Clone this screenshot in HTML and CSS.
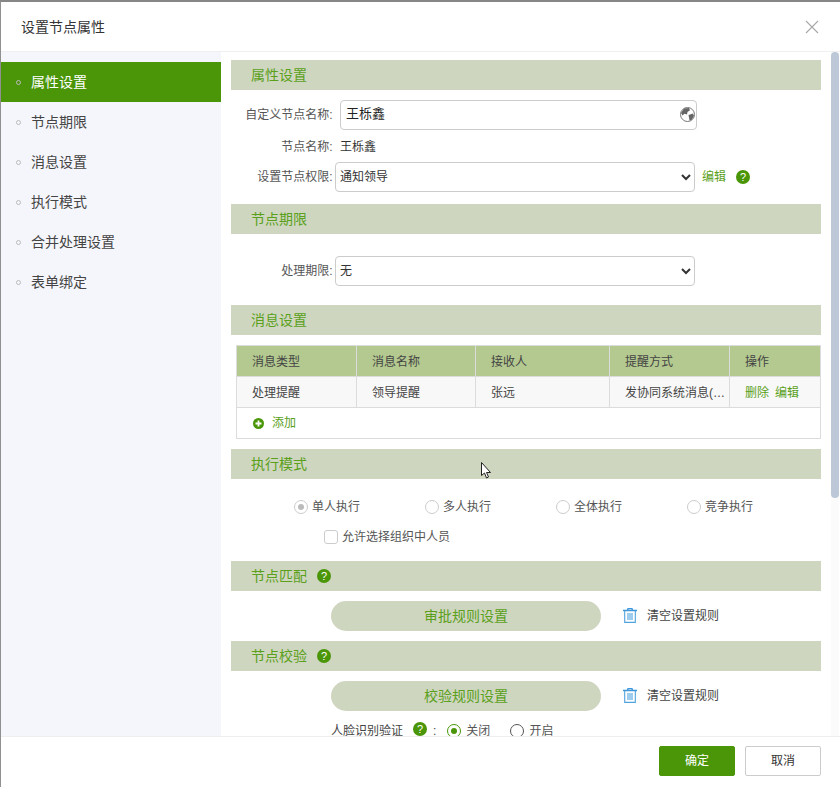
FILE: index.html
```html
<!DOCTYPE html>
<html lang="zh-CN">
<head>
  <meta charset="UTF-8">
  <title>设置节点属性</title>
  <link rel="stylesheet" href="styles.css">
</head>
<body>
  <div class="dialog">
    <div class="dialog-head">
      <span class="dialog-title">设置节点属性</span>
      <svg class="close" width="14" height="14" viewBox="0 0 14 14"><path d="M1 1L13 13M13 1L1 13" stroke="#a8a8a8" stroke-width="1.1" fill="none"/></svg>
    </div>

    <div class="dialog-body">
      <ul class="side">
        <li class="side-item active"><i class="dot"></i>属性设置</li>
        <li class="side-item"><i class="dot"></i>节点期限</li>
        <li class="side-item"><i class="dot"></i>消息设置</li>
        <li class="side-item"><i class="dot"></i>执行模式</li>
        <li class="side-item"><i class="dot"></i>合并处理设置</li>
        <li class="side-item"><i class="dot"></i>表单绑定</li>
      </ul>

      <div class="main">
        <div class="sec-head">属性设置</div>
        <div class="form-row row-input">
          <label class="label">自定义节点名称:</label>
          <div class="name-input">
            <span>王栎鑫</span>
            <svg width="15" height="15" viewBox="0 0 15 15">
              <circle cx="7.5" cy="7.5" r="7" fill="#fff" stroke="#777"/>
              <path d="M4 1.5L9 1L10 3.2L7.5 5L7 7.5L4.5 6.8L2.5 8.5L1 6ZM8.5 8L13 6.5L14 9L11.5 13L9.5 13.5L9 10.5Z" fill="#666"/>
            </svg>
          </div>
        </div>
        <div class="form-row row-text">
          <label class="label">节点名称:</label>
          <span class="value">王栎鑫</span>
        </div>
        <div class="form-row">
          <label class="label">设置节点权限:</label>
          <select class="sel"><option>通知领导</option></select>
          <a class="link edit-link">编辑</a>
          <i class="help">?</i>
        </div>

        <div class="sec-head gap12">节点期限</div>
        <div class="form-row row-limit">
          <label class="label">处理期限:</label>
          <select class="sel"><option>无</option></select>
        </div>

        <div class="sec-head gap19">消息设置</div>
        <table class="msg-table">
          <tr class="msg-head">
            <th class="c1">消息类型</th>
            <th class="c2">消息名称</th>
            <th class="c3">接收人</th>
            <th class="c4">提醒方式</th>
            <th>操作</th>
          </tr>
          <tr class="msg-row">
            <td>处理提醒</td>
            <td>领导提醒</td>
            <td>张远</td>
            <td class="way"><div class="ellipsis">发协同系统消息(短信)</div></td>
            <td><a class="link">删除</a><a class="link op-next">编辑</a></td>
          </tr>
          <tr>
            <td colspan="5">
              <a class="link add">
                <svg width="11" height="11" viewBox="0 0 11 11"><circle cx="5.5" cy="5.5" r="5.5" fill="#4a9608"/><path d="M5.5 2.5V8.5M2.5 5.5H8.5" stroke="#fff" stroke-width="1.8"/></svg>
                添加
              </a>
            </td>
          </tr>
        </table>

        <div class="sec-head gap10">执行模式</div>
        <div class="radios">
          <span class="radio-item"><i class="radio disabled"></i>单人执行</span>
          <span class="radio-item"><i class="radio"></i>多人执行</span>
          <span class="radio-item"><i class="radio"></i>全体执行</span>
          <span class="radio-item"><i class="radio"></i>竞争执行</span>
        </div>
        <div class="check-row"><i class="check"></i>允许选择组织中人员</div>

        <div class="sec-head gap9">节点匹配<i class="help">?</i></div>
        <div class="rule-row">
          <a class="pill">审批规则设置</a>
          <svg class="trash" width="14" height="15" viewBox="0 0 14 15"><path d="M0 2.5H14M4.5 2L5 .6H9L9.5 2" stroke="#3d97da" stroke-width="1.3" fill="none"/><path d="M1.7 3V14.4H12.3V3M5 5V12M7 5V12M9 5V12" stroke="#4fa3e0" stroke-width="1.1" fill="none"/></svg>
          <span class="clear">清空设置规则</span>
        </div>

        <div class="sec-head gap10">节点校验<i class="help">?</i></div>
        <div class="rule-row">
          <a class="pill">校验规则设置</a>
          <svg class="trash" width="14" height="15" viewBox="0 0 14 15"><path d="M0 2.5H14M4.5 2L5 .6H9L9.5 2" stroke="#3d97da" stroke-width="1.3" fill="none"/><path d="M1.7 3V14.4H12.3V3M5 5V12M7 5V12M9 5V12" stroke="#4fa3e0" stroke-width="1.1" fill="none"/></svg>
          <span class="clear">清空设置规则</span>
        </div>
        <div class="face-row">
          人脸识别验证<i class="help face-help">?</i><span class="face-colon">:</span>
          <span class="radio-item face-radio"><i class="radio on"></i>关闭</span>
          <span class="radio-item"><i class="radio dark"></i>开启</span>
        </div>
      </div>

      <div class="scroll-track"><div class="scroll-thumb"></div></div>
    </div>

    <div class="dialog-foot">
      <button class="btn btn-ok">确定</button>
      <button class="btn">取消</button>
    </div>
  </div>

  <!-- mouse pointer caught in the screenshot -->
  <svg class="pointer" width="11" height="17" viewBox="0 0 11 17"><path d="M.5 .5V13.5L3.5 11L5.5 16L7.5 15L5.5 10.5H9.5Z" fill="#fff" stroke="#222" stroke-width="1"/></svg>
</body>
</html>
```

FILE: styles.css
```css
* {
  margin: 0;
  padding: 0;
  box-sizing: border-box;
}

html, body {
  height: 100%;
  overflow: hidden;
}

body {
  position: relative;
  background: #fff;
  color: #333;
  font-family: "Liberation Sans", "Noto Sans CJK SC", sans-serif;
  font-size: 12px;
  line-height: 1.5;
}

.dialog {
  display: flex;
  flex-direction: column;
  height: 787px;
  border-top: 2px solid #868686;
  border-left: 1px solid #909090;
}

.dialog-head {
  display: flex;
  flex: none;
  align-items: center;
  justify-content: space-between;
  height: 50px;
  padding: 0 21px 0 20px;
  border-bottom: 1px solid #f0f0f0;
}

.dialog-title {
  margin-top: 2px;
  font-size: 14px;
  color: #333;
}

.dialog-body {
  position: relative;
  display: flex;
  flex: 1;
  min-height: 0;
  overflow: hidden;
}

.dialog-foot {
  display: flex;
  flex: none;
  justify-content: flex-end;
  gap: 10px;
  height: 51px;
  padding: 9px 19px 0 0;
  border-top: 1px solid #eee;
}

.btn {
  width: 76px;
  height: 30px;
  border: 1px solid #ccc;
  border-radius: 2px;
  background: #fff;
  color: #333;
  font: inherit;
}

.btn-ok {
  border-color: #4a9608;
  background: #4a9608;
  color: #fff;
}

/* left nav */
.side {
  flex: none;
  width: 220px;
  padding-top: 10px;
  background: #f5f6fb;
  list-style: none;
}

.side-item {
  display: flex;
  align-items: center;
  height: 40px;
  padding-left: 15px;
  color: #444;
  font-size: 14px;
}

.side-item.active {
  background: #4a9608;
  color: #fff;
}

.dot {
  width: 5px;
  height: 5px;
  margin-right: 10px;
  border: 1px solid #bbb;
  border-radius: 50%;
}

/* right content */
.main {
  flex: 1;
  min-width: 0;
  padding: 8px 19px 0 10px;
}

.sec-head {
  display: flex;
  align-items: center;
  height: 30px;
  padding-left: 20px;
  background: #cfd6c0;
  color: #5aa01a;
  font-size: 14px;
}

.gap9 { margin-top: 9px; }
.gap10 { margin-top: 10px; }
.gap12 { margin-top: 12px; }
.gap19 { margin-top: 19px; }

.form-row {
  display: flex;
  align-items: center;
}

.row-input {
  margin-top: 10px;
}

.row-text {
  height: 32px;
  padding-top: 2px;
}

.row-limit {
  margin-top: 22px;
}

.label {
  width: 101.5px;
  margin-right: 2.5px;
  color: #555;
  text-align: right;
}

.row-input .name-input,
.row-text .value {
  margin-left: 5px;
}

.value {
  color: #333;
}

.name-input {
  display: flex;
  align-items: center;
  justify-content: space-between;
  width: 357px;
  height: 30px;
  padding: 0 1px 2px 5px;
  border: 1px solid #ccc;
  border-radius: 4px;
  font-size: 13px;
  color: #222;
}

.sel {
  width: 360px;
  height: 30px;
  padding-left: 0;
  border: 1px solid #ccc;
  border-radius: 4px;
  background: #fff;
  color: #333;
  font: inherit;
}

.link {
  color: #5aa01a;
}

.edit-link {
  margin-left: 7px;
}

.help {
  display: inline-block;
  width: 14px;
  height: 14px;
  margin-left: 10px;
  border-radius: 50%;
  background: #4a9608;
  color: #fff;
  font-size: 11px;
  font-style: normal;
  line-height: 14px;
  text-align: center;
}

/* message table */
.msg-table {
  width: 585px;
  height: 94px;
  margin: 10px 0 0 5px;
  border-collapse: collapse;
  table-layout: fixed;
}

.msg-table th,
.msg-table td {
  height: 31px;
  padding: 0 10px 0 15px;
  border: 1px solid #dcdcdc;
  font-weight: normal;
  text-align: left;
}

.msg-table .msg-head th,
.msg-table .msg-row td {
  padding-top: 2px;
}

.msg-table .msg-row .way {
  padding-right: 4px;
}

.msg-head th {
  background: #b3c98f;
  color: #444;
}

.msg-row td {
  background: #f8f8f8;
  color: #444;
}

.c1 { width: 120px; }
.c2 { width: 119px; }
.c3 { width: 134px; }
.c4 { width: 120px; }

.ellipsis {
  overflow: hidden;
  white-space: nowrap;
  text-overflow: ellipsis;
}

.op-next {
  margin-left: 6px;
}

.add {
  display: flex;
  align-items: center;
  gap: 8px;
  padding-left: 1px;
}

/* radios */
.radios {
  display: flex;
  height: 30px;
  margin-top: 13px;
  padding-left: 63px;
}

.radios .radio-item {
  width: 131px;
}

.radio-item {
  display: inline-flex;
  align-items: center;
  color: #555;
}

.radio {
  position: relative;
  width: 14px;
  height: 14px;
  margin-right: 4px;
  border: 1px solid #ccc;
  border-radius: 50%;
  background: #fff;
}

.radio.disabled::after,
.radio.on::after {
  content: "";
  position: absolute;
  top: 3px;
  left: 3px;
  width: 6px;
  height: 6px;
  border-radius: 50%;
  background: #bbb;
}

.radio.on {
  border-color: #4a9608;
}

.radio.on::after {
  background: #4a9608;
}

.radio.dark {
  border-color: #555;
}

.check-row {
  display: flex;
  align-items: center;
  height: 30px;
  padding-left: 93px;
  color: #555;
}

.check {
  width: 14px;
  height: 14px;
  margin-right: 4px;
  border: 1px solid #ccc;
  border-radius: 3px;
}

/* rule buttons */
.rule-row {
  display: flex;
  align-items: center;
  margin-top: 10px;
  padding-left: 100px;
}

.pill {
  width: 270px;
  height: 30px;
  border-radius: 15px;
  background: #cfd6c0;
  color: #5aa01a;
  font-size: 14px;
  line-height: 30px;
  text-align: center;
}

.trash {
  margin: 0 10px 2px 22px;
}

.clear {
  color: #444;
}

.face-row {
  display: flex;
  align-items: center;
  height: 30px;
  margin-top: 5px;
  padding-left: 100px;
  color: #444;
}

.face-help {
  margin: 0 0 4px 10px;
}

.face-colon {
  margin: 0 11px 0 6px;
}

.face-row .radio {
  margin-right: 5px;
}

.face-radio {
  margin-right: 20px;
}

.scroll-track {
  position: absolute;
  top: 0;
  right: 1px;
  bottom: 0;
  width: 8px;
  background: #fbfbfb;
}

.scroll-thumb {
  height: 446px;
  border-radius: 4px;
  background: #bcc8d8;
}

.pointer {
  position: absolute;
  top: 462px;
  left: 481px;
}
```
